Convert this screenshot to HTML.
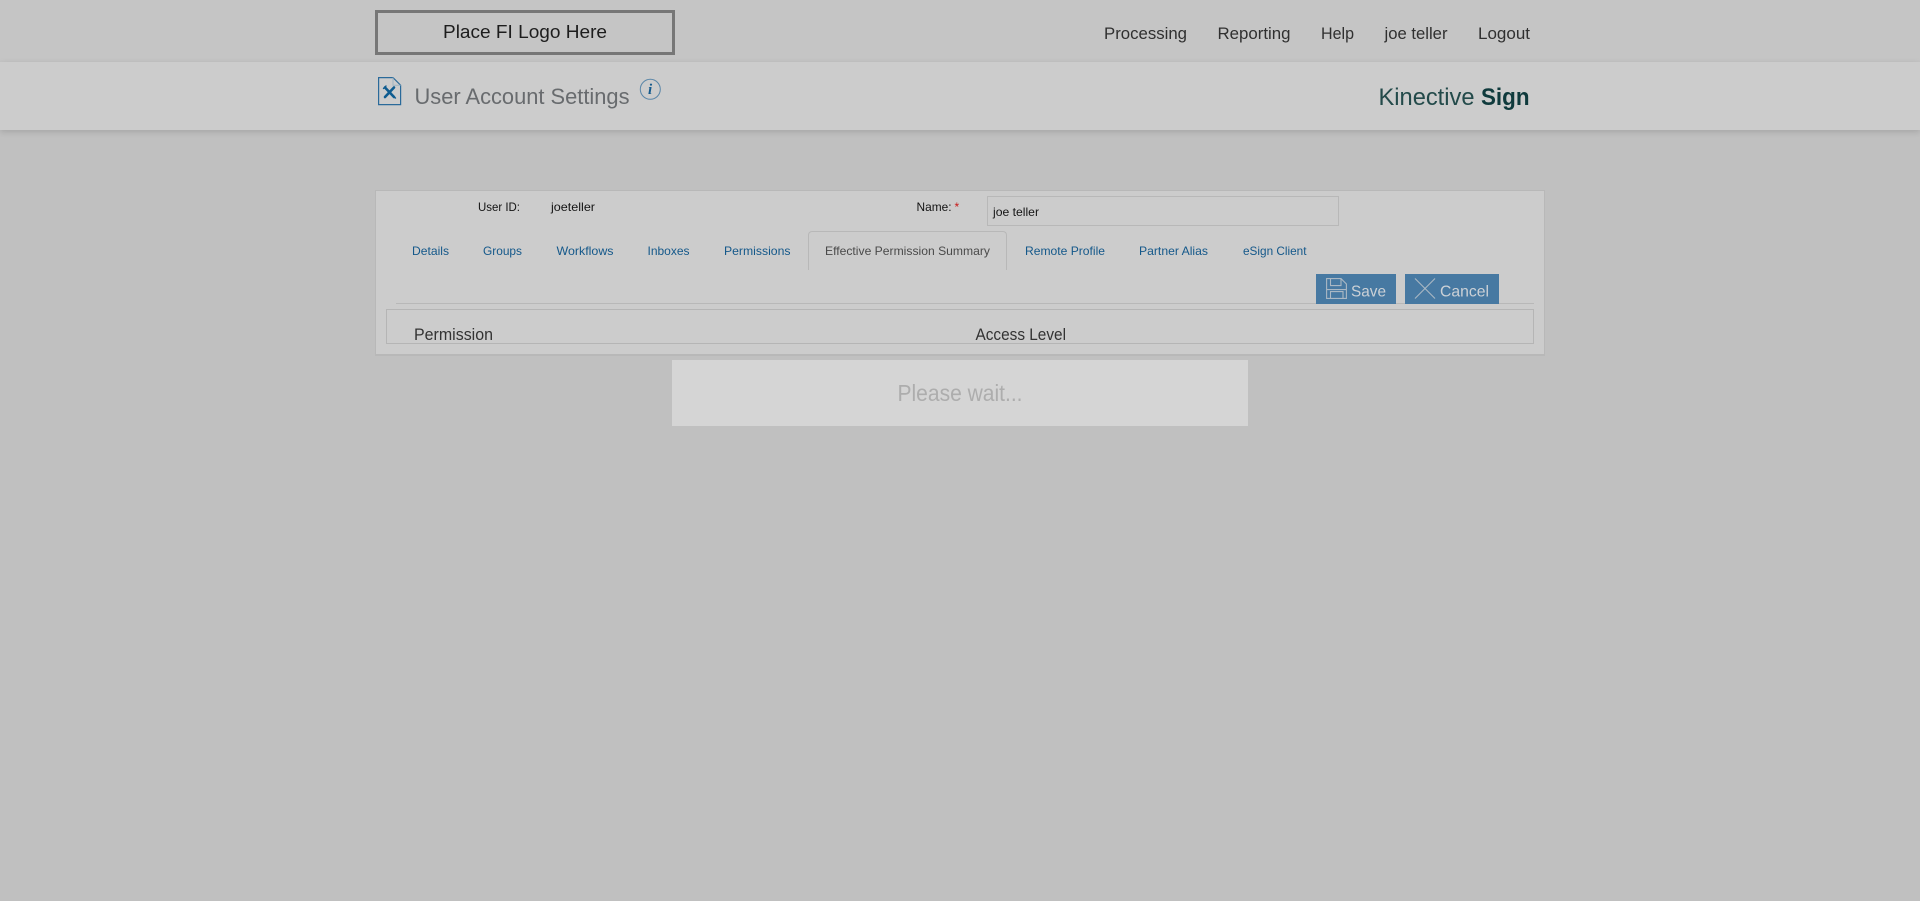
<!DOCTYPE html>
<html lang="en">
<head>
<meta charset="utf-8">
<title>User Account Settings</title>
<style>
html,body{margin:0;padding:0;width:1920px;height:901px;overflow:hidden;background:#c0c0c0;font-family:"Liberation Sans",sans-serif}
.a{position:absolute;box-sizing:border-box}
#hdr{left:0;top:0;width:1920px;height:62px;background:#c5c5c5}
#sub{left:0;top:62px;width:1920px;height:68px;background:#cccccc;box-shadow:0 2px 6px rgba(0,0,0,.14)}
#logo{left:375px;top:10px;width:300px;height:45px;border:3px solid #777}
#panel{left:375px;top:190px;width:1170px;height:166px;background:#cccccc;border:1px solid #b8b8b8;border-bottom:2px solid #b8b8b8}
#input{left:987px;top:196px;width:352px;height:30px;border:1px solid #b8b8b8;background:#cccccc}
#tab{left:808px;top:231px;width:199px;height:39px;border:1px solid #b8b8b8;border-bottom:0;border-radius:4px 4px 0 0}
#hr{left:396px;top:303px;width:1138px;height:1px;background:#b8b8b8}
#box{left:386px;top:309px;width:1148px;height:35px;border:1px solid #b5b5b5}
.btn{top:274px;height:30px;background:#4779a2}
#save{left:1316px;width:80px}
#cancel{left:1405px;width:94px}
#wait{left:672px;top:360px;width:576px;height:66px;background:#d5d5d5}
svg{position:absolute;left:0;top:0}
</style>
</head>
<body>
<div class="a" id="hdr"></div>
<div class="a" id="sub"></div>
<div class="a" id="logo"></div>
<div class="a" id="panel"></div>
<div class="a" id="input"></div>
<div class="a" id="tab"></div>
<div class="a" id="hr"></div>
<div class="a" id="box"></div>
<div class="a btn" id="save"></div>
<div class="a btn" id="cancel"></div>
<div class="a" id="wait"></div>
<svg width="1920" height="901" viewBox="0 0 1920 901" xmlns="http://www.w3.org/2000/svg" font-family="'Liberation Sans',sans-serif">
  <!-- header -->
  <text x="443" y="38" font-size="18" fill="#1d1d1d" textLength="164" lengthAdjust="spacingAndGlyphs">Place FI Logo Here</text>
  <g font-size="17" fill="#303030">
    <text x="1104" y="39" textLength="83" lengthAdjust="spacingAndGlyphs">Processing</text>
    <text x="1217.5" y="39" textLength="73" lengthAdjust="spacingAndGlyphs">Reporting</text>
    <text x="1321" y="39" textLength="33" lengthAdjust="spacingAndGlyphs">Help</text>
    <text x="1384.5" y="39" textLength="63" lengthAdjust="spacingAndGlyphs">joe teller</text>
    <text x="1478" y="39" textLength="52" lengthAdjust="spacingAndGlyphs">Logout</text>
  </g>
  <!-- sub header -->
  <g fill="none" stroke="#2a6a9a" stroke-width="1.2">
    <path d="M378.6 77.6H393L400.6 85.2V104.6H378.6Z"/>
    <path d="M393 77.6V85.2H400.6" stroke="#9fb3c2" stroke-width="1"/>
  </g>
  <g stroke="#0f5c90" fill="none" stroke-linecap="round">
    <path d="M385 97L394 87.5" stroke-width="2.6"/>
    <path d="M385 87.5L394 97" stroke-width="2.6"/>
    <path d="M383.5 88.5L386 86M392.5 95.5L395.5 98" stroke-width="1.4"/>
  </g>
  <text x="414.5" y="104" font-size="22" fill="#686b6e" textLength="215" lengthAdjust="spacingAndGlyphs">User Account Settings</text>
  <circle cx="650.3" cy="89.3" r="10" fill="none" stroke="#5a86a8" stroke-width="1"/>
  <text x="648" y="94" font-family="'Liberation Serif',serif" font-size="15" font-style="italic" font-weight="bold" fill="#155a8c">i</text>
  <text x="1378.5" y="105" font-size="24" fill="#234a4a" textLength="96" lengthAdjust="spacingAndGlyphs">Kinective</text>
  <text x="1481" y="105" font-size="24" font-weight="bold" fill="#0f3a3c" textLength="48.5" lengthAdjust="spacingAndGlyphs">Sign</text>
  <!-- user row -->
  <g font-size="12" fill="#141414">
    <text x="478" y="211" textLength="42" lengthAdjust="spacingAndGlyphs">User ID:</text>
    <text x="551" y="211" textLength="44" lengthAdjust="spacingAndGlyphs">joeteller</text>
    <text x="916.5" y="211" textLength="35" lengthAdjust="spacingAndGlyphs">Name:</text>
    <text x="993" y="216" textLength="46" lengthAdjust="spacingAndGlyphs">joe teller</text>
  </g>
  <text x="954.5" y="211" font-size="12" fill="#c81818">*</text>
  <!-- tabs -->
  <g font-size="12" fill="#14588a">
    <text x="412" y="255" textLength="37" lengthAdjust="spacingAndGlyphs">Details</text>
    <text x="483" y="255" textLength="39" lengthAdjust="spacingAndGlyphs">Groups</text>
    <text x="556.5" y="255" textLength="57" lengthAdjust="spacingAndGlyphs">Workflows</text>
    <text x="647.5" y="255" textLength="42" lengthAdjust="spacingAndGlyphs">Inboxes</text>
    <text x="724" y="255" textLength="66.5" lengthAdjust="spacingAndGlyphs">Permissions</text>
    <text x="825" y="255" textLength="165" lengthAdjust="spacingAndGlyphs" fill="#4a4a4a">Effective Permission Summary</text>
    <text x="1025" y="255" textLength="80" lengthAdjust="spacingAndGlyphs">Remote Profile</text>
    <text x="1139" y="255" textLength="69" lengthAdjust="spacingAndGlyphs">Partner Alias</text>
    <text x="1243" y="255" textLength="63.5" lengthAdjust="spacingAndGlyphs">eSign Client</text>
  </g>
  <!-- buttons -->
  <g fill="none" stroke="#aab8c4" stroke-width="1.1">
    <path d="M1326.6 278.6H1341L1346.4 284V298.4H1326.6Z"/>
    <path d="M1330.5 278.6V285.6H1341V278.6"/>
    <path d="M1326.6 289.6H1346.4"/>
    <path d="M1330.5 298.4V291.6H1343V298.4"/>
    <path d="M1415 278.5L1435 298.5M1435 278.5L1415 298.5"/>
  </g>
  <g font-size="16" fill="#ccd1d6">
    <text x="1351" y="296.5" textLength="35" lengthAdjust="spacingAndGlyphs">Save</text>
    <text x="1440" y="296.5" textLength="49" lengthAdjust="spacingAndGlyphs">Cancel</text>
  </g>
  <!-- table head -->
  <g font-size="17" fill="#333333">
    <text x="414" y="340" textLength="79" lengthAdjust="spacingAndGlyphs">Permission</text>
    <text x="975.5" y="340" textLength="90.5" lengthAdjust="spacingAndGlyphs">Access Level</text>
  </g>
  <!-- please wait -->
  <text x="897.5" y="401" font-size="23" fill="#adadad" textLength="125" lengthAdjust="spacingAndGlyphs">Please wait...</text>
</svg>
</body>
</html>
